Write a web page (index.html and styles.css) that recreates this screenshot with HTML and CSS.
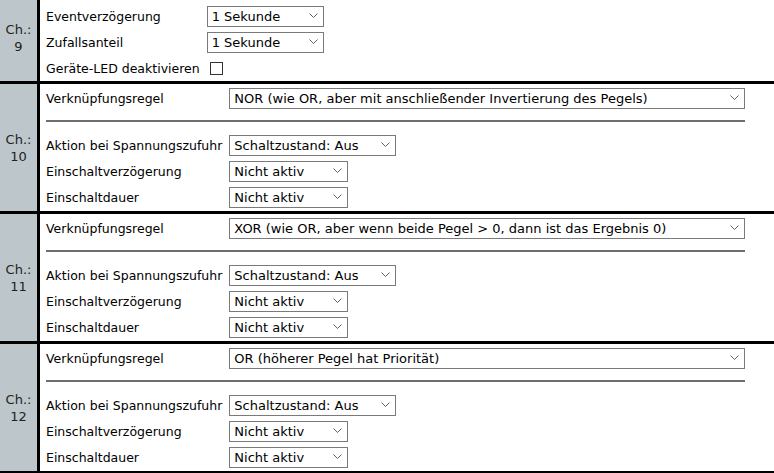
FILE: index.html
```html
<!DOCTYPE html>
<html lang="de">
<head>
    <meta charset="UTF-8">
    <title>Kanäle</title>
    <link rel="stylesheet" href="styles.css">
</head>
<body>

    <!-- Channel 9 -->
    <div class="channel channel-first">
        <div class="ch-label">Ch.:<br>9</div>
        <div class="ch-body">
            <div class="params">
                <span class="param-name">Eventverzögerung</span>
                <select class="sel sel-short"><option>1 Sekunde</option></select>
                <span class="param-name">Zufallsanteil</span>
                <select class="sel sel-short"><option>1 Sekunde</option></select>
                <span class="param-name">Geräte-LED deaktivieren</span>
                <span><input type="checkbox" class="check"></span>
            </div>
        </div>
    </div>

    <!-- Channel 10 -->
    <div class="channel">
        <div class="ch-label">Ch.:<br>10</div>
        <div class="ch-body">
            <div class="params params-wide">
                <span class="param-name">Verknüpfungsregel</span>
                <select class="sel sel-full"><option>NOR (wie OR, aber mit anschließender Invertierung des Pegels)</option></select>
                <hr class="sep">
                <span class="param-name">Aktion bei Spannungszufuhr</span>
                <select class="sel sel-state"><option>Schaltzustand: Aus</option></select>
                <span class="param-name">Einschaltverzögerung</span>
                <select class="sel sel-time"><option>Nicht aktiv</option></select>
                <span class="param-name">Einschaltdauer</span>
                <select class="sel sel-time"><option>Nicht aktiv</option></select>
            </div>
        </div>
    </div>

    <!-- Channel 11 -->
    <div class="channel">
        <div class="ch-label">Ch.:<br>11</div>
        <div class="ch-body">
            <div class="params params-wide">
                <span class="param-name">Verknüpfungsregel</span>
                <select class="sel sel-full"><option>XOR (wie OR, aber wenn beide Pegel &gt; 0, dann ist das Ergebnis 0)</option></select>
                <hr class="sep">
                <span class="param-name">Aktion bei Spannungszufuhr</span>
                <select class="sel sel-state"><option>Schaltzustand: Aus</option></select>
                <span class="param-name">Einschaltverzögerung</span>
                <select class="sel sel-time"><option>Nicht aktiv</option></select>
                <span class="param-name">Einschaltdauer</span>
                <select class="sel sel-time"><option>Nicht aktiv</option></select>
            </div>
        </div>
    </div>

    <!-- Channel 12 -->
    <div class="channel">
        <div class="ch-label">Ch.:<br>12</div>
        <div class="ch-body">
            <div class="params params-wide">
                <span class="param-name">Verknüpfungsregel</span>
                <select class="sel sel-full"><option>OR (höherer Pegel hat Priorität)</option></select>
                <hr class="sep">
                <span class="param-name">Aktion bei Spannungszufuhr</span>
                <select class="sel sel-state"><option>Schaltzustand: Aus</option></select>
                <span class="param-name">Einschaltverzögerung</span>
                <select class="sel sel-time"><option>Nicht aktiv</option></select>
                <span class="param-name">Einschaltdauer</span>
                <select class="sel sel-time"><option>Nicht aktiv</option></select>
            </div>
        </div>
    </div>

</body>
</html>
```

FILE: styles.css
```css
body {
    margin: 0;
    background-color: #fff;
    color: #000;
    font-family: "DejaVu Sans", Verdana, sans-serif;
    font-size: 12.5px;
}

/* One block per channel */
.channel {
    display: flex;
    border-bottom: 3px solid #000;
}

/* The first block is cut off at the top of the page */
.channel-first {
    margin-top: -5px;
}

.ch-label {
    width: 37px;
    flex-shrink: 0;
    background-color: #bdc6cb; /* grey-blue column */
    border-right: 3px solid #000;
    display: flex;
    align-items: center;
    justify-content: center;
    text-align: center;
    line-height: 17px;
    font-size: 13px;
    color: #222;
}

.ch-body {
    flex: 1;
    padding: 1px 29px 1px 6px;
}

.channel-first .ch-body {
    padding: 8px 29px 0 6px;
}

/* Name / value pairs */
.params {
    display: grid;
    grid-template-columns: max-content max-content;
    column-gap: 7px;
    align-items: center;
}

.params-wide {
    grid-template-columns: max-content 1fr;
}

.param-name {
    white-space: nowrap;
    padding-top: 1px;
    line-height: 25px;
}

.sep {
    grid-column: 1 / 3;
    margin: 9px 0 10px 0;
    border: 0;
    border-top: 2px solid #6e6e6e;
    height: 0;
}

/* Selects drawn by hand so the chevron matches */
.sel {
    appearance: none;
    -webkit-appearance: none;
    height: 21px;
    margin: 0;
    padding: 0 20px 0 4px;
    border: 1px solid #7a7a7a;
    border-radius: 0;
    background-color: #fff;
    background-image: url("data:image/svg+xml;utf8,<svg xmlns='http://www.w3.org/2000/svg' width='9' height='6'><path d='M0.5 0.5 L4.5 4.5 L8.5 0.5' fill='none' stroke='%23606060' stroke-width='1'/></svg>");
    background-repeat: no-repeat;
    background-position: right 5px center;
    font-family: inherit;
    font-size: 13px;
    color: #000;
}

.sel-short {
    width: 117px;
}

.sel-state {
    width: 167px;
}

.sel-time {
    width: 119px;
}

.sel-full {
    width: 100%;
}

.check {
    appearance: none;
    -webkit-appearance: none;
    display: block;
    width: 13px;
    height: 13px;
    margin: 0 0 0 3px;
    border: 1px solid #333;
    background-color: #fff;
}
```
